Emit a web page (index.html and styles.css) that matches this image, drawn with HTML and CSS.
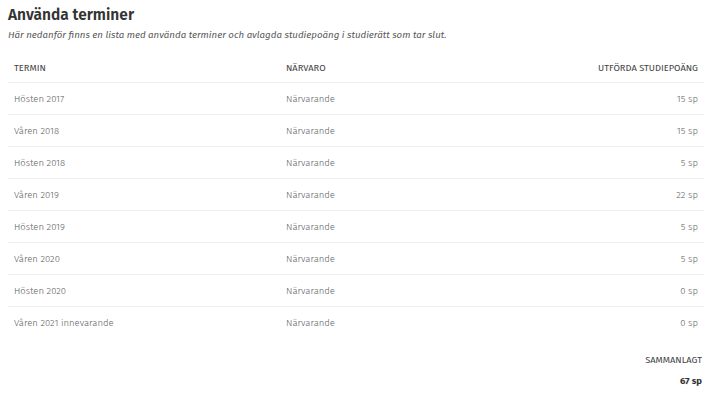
FILE: index.html
```html
<!DOCTYPE html>
<html lang="sv">
<head>
	<meta charset="UTF-8">
	<meta name="viewport" content="width=device-width, initial-scale=1.0">
	<title>Använda terminer</title>
	<link rel="stylesheet" href="styles.css">
</head>
<body>
	<div class="page">
		<h1>Använda terminer</h1>
		<p class="intro">Här nedanför finns en lista med använda terminer och avlagda studiepoäng i studierätt som tar slut.</p>

		<table class="terms">
			<thead>
				<tr>
					<th class="col-term">Termin</th>
					<th class="col-presence">Närvaro</th>
					<th class="col-credits">Utförda studiepoäng</th>
				</tr>
			</thead>
			<tbody>
				<tr><td>Hösten 2017</td><td>Närvarande</td><td class="col-credits">15 sp</td></tr>
				<tr><td>Våren 2018</td><td>Närvarande</td><td class="col-credits">15 sp</td></tr>
				<tr><td>Hösten 2018</td><td>Närvarande</td><td class="col-credits">5 sp</td></tr>
				<tr><td>Våren 2019</td><td>Närvarande</td><td class="col-credits">22 sp</td></tr>
				<tr><td>Hösten 2019</td><td>Närvarande</td><td class="col-credits">5 sp</td></tr>
				<tr><td>Våren 2020</td><td>Närvarande</td><td class="col-credits">5 sp</td></tr>
				<tr><td>Hösten 2020</td><td>Närvarande</td><td class="col-credits">0 sp</td></tr>
				<tr><td>Våren 2021 innevarande</td><td>Närvarande</td><td class="col-credits">0 sp</td></tr>
			</tbody>
		</table>

		<div class="total">
			<div class="total-label">Sammanlagt</div>
			<div class="total-value">67 sp</div>
		</div>
	</div>
</body>
</html>
```

FILE: styles.css
```css
body {
	margin: 0;
	font-family: "Fira Sans", Lato, "Noto Sans", sans-serif;
	color: #333;
}
.page {
	padding: 0 16px 0 8px;
}
h1 {
	margin: 0;
	padding-top: 5px;
	font-size: 15.5px;
	line-height: 20px;
	font-weight: 600;
	color: #333;
}
.intro {
	margin: 3px 0 0;
	font-size: 9.7px;
	line-height: 14px;
	font-style: italic;
	color: #5a5a5a;
}
.terms {
	width: 100%;
	margin-top: 11px;
	border-collapse: collapse;
	font-size: 9.5px;
}
.terms th {
	height: 29px;
	padding: 0 6px;
	text-align: left;
	font-size: 9.3px;
	font-weight: 400;
	text-transform: uppercase;
	color: #444;
	border-bottom: 1px solid #eee;
}
.terms td {
	height: 31px;
	padding: 0 6px;
	font-weight: 300;
	color: #606060;
	border-bottom: 1px solid #eee;
}
.terms tbody tr:last-child td {
	border-bottom: none;
}
.terms .col-term {
	width: 260px;
}
.terms .col-credits {
	text-align: right;
}
.total {
	margin-top: 15px;
	padding-right: 2px;
	text-align: right;
	font-size: 9.3px;
	line-height: 14px;
}
.total-label {
	text-transform: uppercase;
	color: #444;
}
.total-value {
	margin-top: 7px;
	font-size: 9.5px;
	font-weight: 700;
	color: #333;
}
```
